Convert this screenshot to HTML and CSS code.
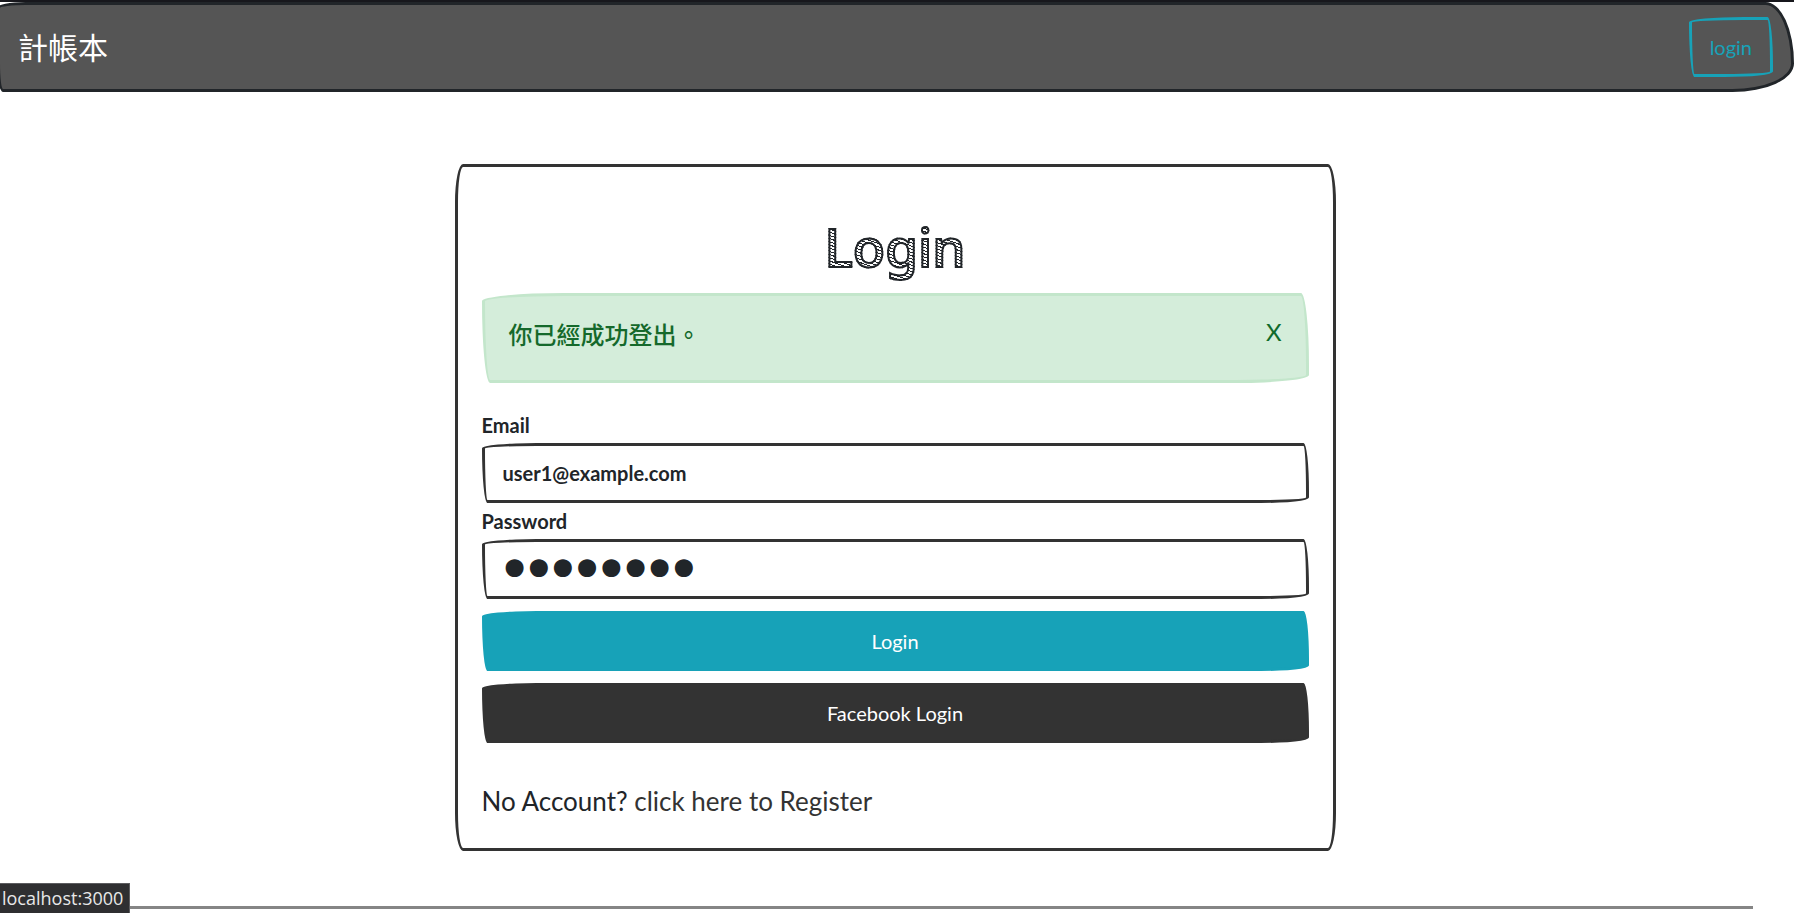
FILE: index.html
```html
<!DOCTYPE html>
<html lang="zh-Hant">
<head>
<meta charset="utf-8">
<meta name="viewport" content="width=device-width, initial-scale=1">
<title>計帳本</title>
<link rel="stylesheet" href="styles.css">
</head>
<body>
<header class="topbar">
  <nav class="navbar">
    <a class="brand" href="#">計帳本</a>
    <a class="btn btn-outline" href="#">login</a>
  </nav>
</header>
<div class="content">
  <main class="card">
    <h1 class="title">Login</h1>
    <div class="alert" role="alert">
      <p class="alert-text">你已經成功登出。</p>
      <button class="alert-close" type="button" aria-label="Close">X</button>
    </div>
    <form class="form">
      <label class="label" for="email">Email</label>
      <input class="field" id="email" type="email" value="user1@example.com">
      <label class="label" for="password">Password</label>
      <input class="field field-password" id="password" type="password" value="12345678">
      <button class="btn btn-info" type="submit">Login</button>
      <a class="btn btn-dark" href="#">Facebook Login</a>
    </form>
    <p class="register">No Account? <a class="register-link" href="#">click here to Register</a></p>
  </main>
</div>
<footer class="footer"><hr class="rule"></footer>
<div class="status">localhost:3000</div>
</body>
</html>
```
FILE: styles.css
```css
* {
  box-sizing: border-box;
}

body {
  margin: 0;
  background: #fff;
  color: #212529;
  font: 20px/36px Lato, "Noto Sans CJK TC", sans-serif;
}

a {
  color: inherit;
  text-decoration: none;
}

.topbar {
  overflow: hidden;
  border-top: 2px solid #17171c;
}

.navbar {
  display: flex;
  align-items: center;
  justify-content: space-between;
  margin-left: -3px;
  padding: 12px 18px;
  border: 3px solid #212529;
  border-radius: 38px 38px 82px 8px / 8px 82px 38px 38px;
  background: #555;
}

.brand {
  padding-bottom: 3px;
  color: #fff;
  font-family: "Noto Sans CJK TC", sans-serif;
  font-size: 30px;
  font-weight: 400;
}

.btn {
  padding: 9px 18px;
  border: 3px solid;
  border-radius: 383px 38px 338px 38px / 38px 338px 38px 383px;
  font: inherit;
  text-align: center;
}

.btn-outline {
  border-color: #17a2b8;
  color: #17a2b8;
}

.btn-info {
  margin-top: 12px;
  border-color: #17a2b8;
  background: #17a2b8;
  color: #fff;
}

.btn-dark {
  margin-top: 12px;
  border-color: #333;
  background: #333;
  color: #fff;
}

.content {
  padding: 72px 4px 0 0;
}

.card {
  max-width: 881px;
  margin: 0 auto;
  padding: 42px 24px 24px;
  border: 3px solid #333;
  border-radius: 8px / 38px;
}

.title {
  margin: 0 0 8px;
  background: repeating-linear-gradient(20deg, #212529 0 1px, #fff 1px 3px);
  background-clip: text;
  color: transparent;
  font: 500 53px/76px "Noto Sans", sans-serif;
  text-align: center;
  -webkit-text-stroke: 2px #212529;
}

.alert {
  display: flex;
  align-items: flex-start;
  justify-content: space-between;
  margin-bottom: 24px;
  padding: 18px 24px 30px;
  border: 3px solid #c3e6cb;
  border-radius: 383px 38px 338px 38px / 38px 338px 38px 383px;
  background: #d4edda;
  color: #15692b;
}

.alert-text {
  margin: 0;
  padding-top: 3px;
  font-family: "Noto Sans CJK TC", sans-serif;
  font-size: 24px;
  line-height: 33px;
  font-weight: 500;
}

.alert-close {
  padding: 0;
  border: 0;
  background: none;
  color: #0f6b2c;
  font: inherit;
  font-size: 24px;
}

.form {
  display: flex;
  flex-direction: column;
}

.label {
  font-weight: 700;
}

.field {
  width: 100%;
  height: 60px;
  padding: 0 18px;
  border: 3px solid #333;
  border-radius: 383px 38px 338px 38px / 38px 338px 38px 383px;
  background: #fff;
  color: #212529;
  font: inherit;
  font-weight: 700;
}

.field-password {
  font-family: "DejaVu Sans", sans-serif;
  font-size: 41px;
  font-weight: 400;
  -webkit-text-stroke: 6px #212529;
}

.register {
  margin: 36px 0 0;
  font-size: 26px;
  line-height: 45px;
}

.register-link {
  color: #333;
}

.footer {
  max-width: 1712px;
  margin: 55px auto 0;
}

.rule {
  height: 3px;
  margin: 0;
  border: 0;
  background: #858585;
}

.status {
  position: fixed;
  bottom: 0;
  left: 0;
  padding: 2px 6px 3px 2px;
  border: 1px solid #5c5c5f;
  border-width: 1px 1px 0 0;
  background: #2f2f31;
  color: #e8e8e8;
  font: 18px/24px "Open Sans", sans-serif;
}
```
